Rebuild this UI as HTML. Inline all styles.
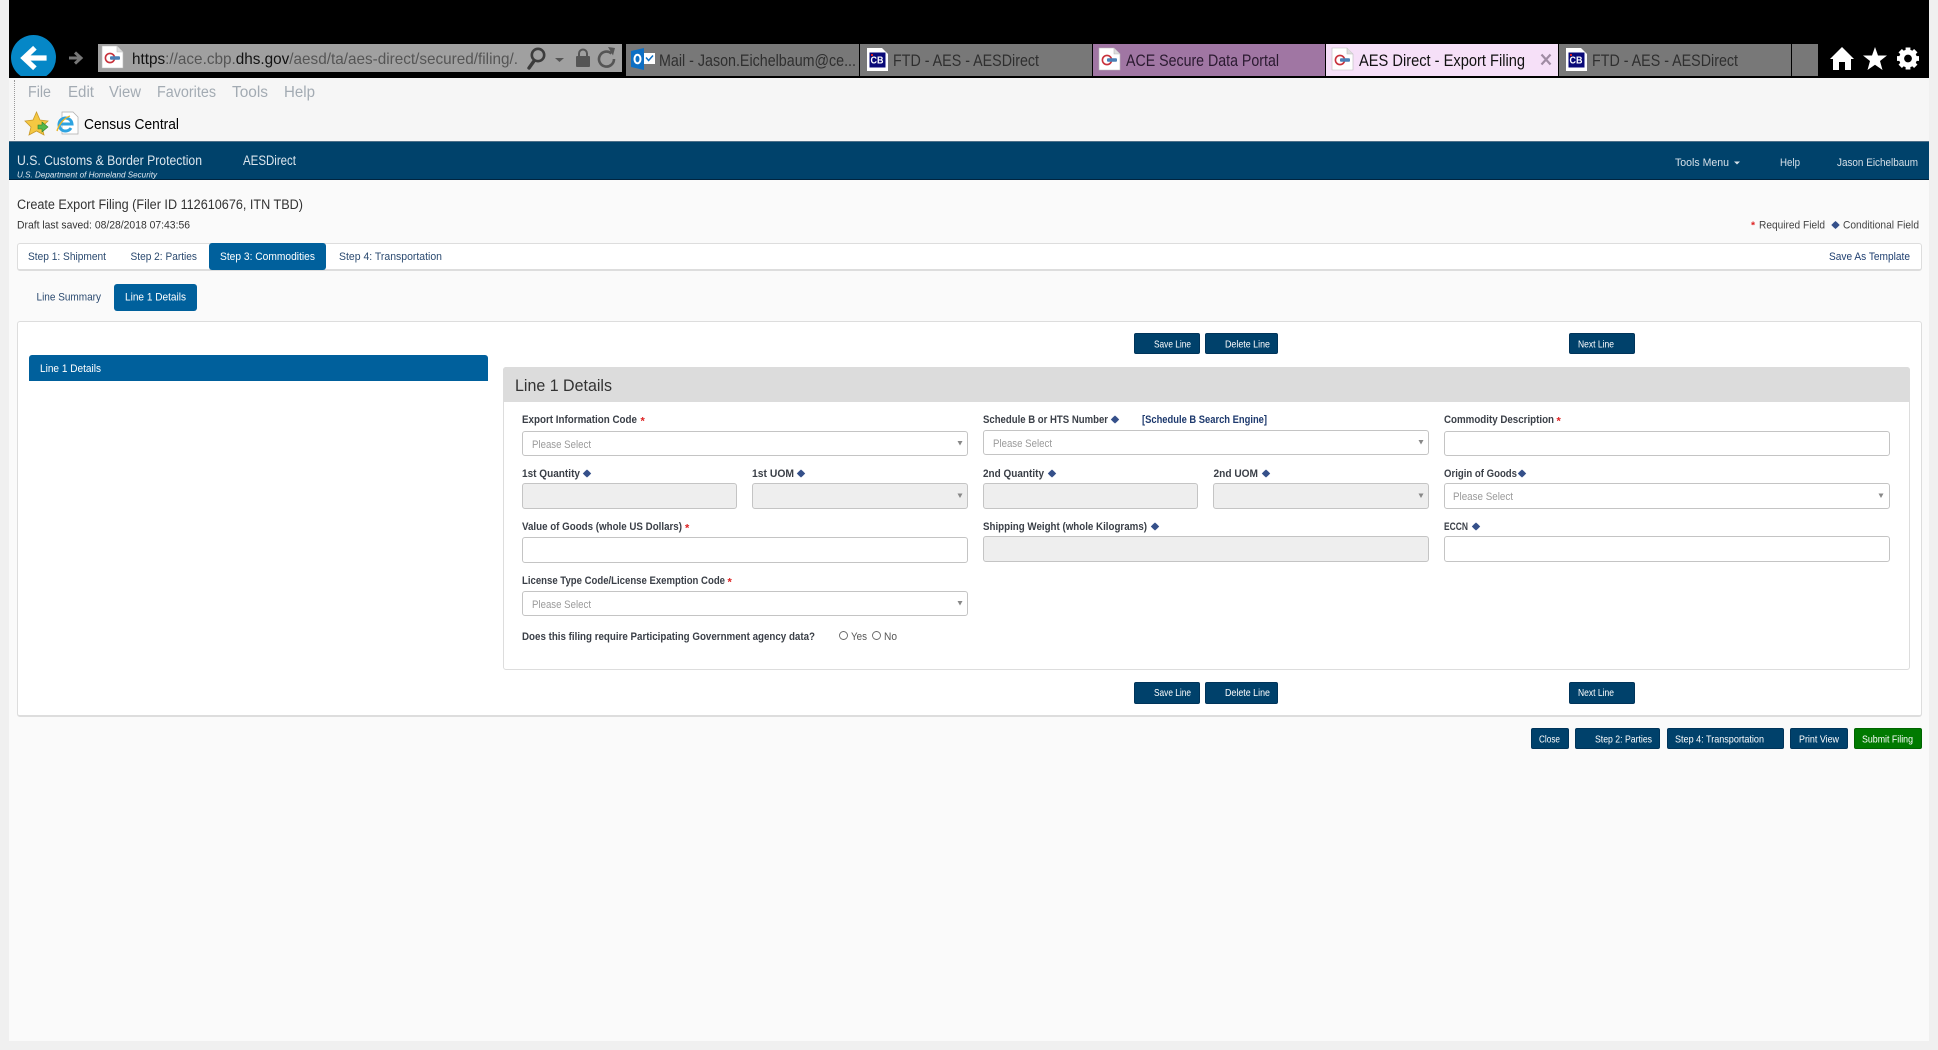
<!DOCTYPE html>
<html lang="en"><head><meta charset="utf-8"><title>AES Direct - Export Filing</title>
<style>
html,body{margin:0;padding:0;background:#f0f0f0}
#p{position:relative;width:1938px;height:1050px;overflow:hidden;background:#f0f0f0}
#p div{position:absolute;box-sizing:border-box}
.btn{background:#00416b;border:1px solid #00345a;border-radius:2px}
.f{border:1px solid #c4c4c4;border-radius:3px;background:#fff}
.d{background:#eeeeee}
svg{position:absolute;left:0;top:0}
text{font-family:"Liberation Sans",sans-serif}
.l{font-size:11px;font-weight:bold;fill:#3a3f47}
.ps{font-size:11px;fill:#9a9a9a}
.w{font-size:10.5px;fill:#fff}
.s{font-size:11px;fill:#2b4a70}
.t{font-size:17px;fill:#2f2f2f}
</style></head><body>
<div id="p">
<div style="left:9px;top:0;width:1920px;height:1041px;background:#fafafa"></div>
<div style="left:9px;top:0;width:1920px;height:78px;background:#000"></div>
<div style="left:9px;top:78px;width:1920px;height:63px;background:#f6f6f6"></div>
<div style="left:14px;top:80px;width:0;height:60px;border-left:1px dotted #999"></div>
<div style="left:9px;top:141px;width:1920px;height:39px;background:#00426b;border-top:1px solid #4d6f88;border-bottom:1px solid #00243f"></div>
<div style="left:98px;top:44px;width:524px;height:28px;background:#a0a0a0"></div>
<div style="left:626px;top:44px;width:233px;height:32px;background:#787878"></div>
<div style="left:860px;top:44px;width:232px;height:32px;background:#787878"></div>
<div style="left:1093px;top:44px;width:232px;height:32px;background:#a076a3"></div>
<div style="left:1326px;top:44px;width:232px;height:32px;background:#f6e0f8"></div>
<div style="left:1559px;top:44px;width:232px;height:32px;background:#787878"></div>
<div style="left:1792px;top:44px;width:26px;height:32px;background:#787878"></div>

<div style="left:17px;top:243px;width:1905px;height:28px;background:#fff;border:1px solid #ddd;border-bottom-width:2px;border-radius:3px"></div>
<div style="left:209px;top:243px;width:117px;height:27px;background:#00609c;border-radius:3px"></div>
<div style="left:114px;top:284px;width:83px;height:27px;background:#00609c;border-radius:3px"></div>
<div style="left:17px;top:321px;width:1905px;height:396px;background:#fff;border:1px solid #ddd;border-bottom-width:2px;border-radius:3px"></div>
<div style="left:29px;top:355px;width:459px;height:26px;background:#00609c;border-radius:3px 3px 0 0"></div>
<div style="left:503px;top:367px;width:1407px;height:303px;background:#fff;border:1px solid #ddd;border-radius:3px"></div>
<div style="left:503px;top:367px;width:1407px;height:35px;background:#dcdcdc;border-radius:3px 3px 0 0"></div>

<div class="btn" style="left:1134px;top:333px;width:66px;height:21px"></div>
<div class="btn" style="left:1205px;top:333px;width:73px;height:21px"></div>
<div class="btn" style="left:1569px;top:333px;width:66px;height:21px"></div>
<div class="btn" style="left:1134px;top:682px;width:66px;height:22px"></div>
<div class="btn" style="left:1205px;top:682px;width:73px;height:22px"></div>
<div class="btn" style="left:1569px;top:682px;width:66px;height:22px"></div>
<div class="btn" style="left:1531px;top:728px;width:38px;height:21px"></div>
<div class="btn" style="left:1575px;top:728px;width:85px;height:21px"></div>
<div class="btn" style="left:1667px;top:728px;width:117px;height:21px"></div>
<div class="btn" style="left:1790px;top:728px;width:58px;height:21px"></div>
<div class="btn" style="left:1854px;top:728px;width:68px;height:21px;background:#007a00;border-color:#006400"></div>

<div class="f" style="left:522px;top:431px;width:446px;height:25px"></div>
<div class="f" style="left:983px;top:430px;width:446px;height:25px"></div>
<div class="f" style="left:1444px;top:431px;width:446px;height:25px"></div>
<div class="f d" style="left:522px;top:483px;width:215px;height:26px"></div>
<div class="f d" style="left:752px;top:483px;width:216px;height:26px"></div>
<div class="f d" style="left:983px;top:483px;width:215px;height:26px"></div>
<div class="f d" style="left:1213px;top:483px;width:216px;height:26px"></div>
<div class="f" style="left:1444px;top:483px;width:446px;height:26px"></div>
<div class="f" style="left:522px;top:537px;width:446px;height:26px"></div>
<div class="f d" style="left:983px;top:536px;width:446px;height:26px"></div>
<div class="f" style="left:1444px;top:536px;width:446px;height:26px"></div>
<div class="f" style="left:522px;top:591px;width:446px;height:25px"></div>

<svg width="1938" height="1050" viewBox="0 0 1938 1050" xmlns="http://www.w3.org/2000/svg">
<defs>
<g id="doc"><path d="M0 0H15L21 6V22H0Z" fill="#fff" stroke="#bbb" stroke-width=".6"/><path d="M15 0V6H21" fill="#ddd" stroke="#bbb" stroke-width=".6"/><circle cx="8" cy="12" r="4.6" fill="none" stroke="#c8323c" stroke-width="1.6"/><rect x="8" y="10.2" width="10" height="3.6" rx="1" fill="#4a7fb5"/></g>
<g id="cb"><path d="M0 0H15L21 6V23H0Z" fill="#fff"/><rect x="2.5" y="4.5" width="16" height="15" fill="#0a0a78"/><rect x="4" y="6" width="2" height="2" fill="#d22"/></g>
<polygon id="dm" points="0,-4 2,-2.2 4.2,0 2,2.2 0,4 -2,2.2 -4.2,0 -2,-2.2" fill="#35508a"/>
<polygon id="ca" points="-2.5,-2 2.5,-2 0,2.5" fill="#888"/>
<rect id="tooth" x="-2.4" y="-11" width="4.8" height="5" fill="#fff"/>
</defs>

<!-- back / forward -->
<clipPath id="bc"><rect x="0" y="30" width="70" height="46"/></clipPath>
<circle cx="33.5" cy="57.5" r="22.5" fill="#0587c7" clip-path="url(#bc)"/>
<path d="M44 58H26M33 49.5 24 58l9 8.5" fill="none" stroke="#fff" stroke-width="5.2" stroke-linecap="square"/>
<path d="M69 58H80M75 52.5 81 58l-6 5.5" fill="none" stroke="#777" stroke-width="3"/>

<!-- address bar -->
<use href="#doc" x="102" y="46"/>
<text x="132" y="64" font-size="16" textLength="386" lengthAdjust="spacingAndGlyphs" fill="#555"><tspan fill="#111">https</tspan>://ace.cbp.<tspan fill="#111">dhs.gov</tspan>/aesd/ta/aes-direct/secured/filing/.</text>
<circle cx="538" cy="55" r="6.2" fill="none" stroke="#3c3c3c" stroke-width="2.6"/><path d="M534 61l-5 7" stroke="#3c3c3c" stroke-width="3.4" stroke-linecap="round"/>
<polygon points="555,58 564,58 559.5,62" fill="#555"/>
<path d="M579 57v-3.5a4 4 0 0 1 8 0V57" fill="none" stroke="#555" stroke-width="2"/><rect x="576" y="56" width="14" height="11" rx="1" fill="#555"/>
<path d="M611.5 53.5a7.5 7.5 0 1 0 2.5 5.5" fill="none" stroke="#555" stroke-width="2.6"/><polygon points="608,47 615,48 613,55.5" fill="#555"/>

<!-- tabs -->
<path d="M631 51l13-3v22l-13-3z" fill="#0d6fc4"/><ellipse cx="637.5" cy="59" rx="3" ry="4.3" fill="none" stroke="#fff" stroke-width="2"/><rect x="644" y="53" width="11" height="11" fill="#fff"/><path d="M646 57.5l2.6 3 4.4-5" fill="none" stroke="#0d6fc4" stroke-width="1.5"/>
<text class="t" x="659" y="66" textLength="197" lengthAdjust="spacingAndGlyphs">Mail - Jason.Eichelbaum@ce...</text>
<use href="#cb" x="867" y="48"/><text x="870.5" y="63.5" font-size="10" font-weight="bold" fill="#fff" textLength="13" lengthAdjust="spacingAndGlyphs">CB</text>
<text class="t" x="893" y="66" textLength="146" lengthAdjust="spacingAndGlyphs">FTD - AES - AESDirect</text>
<use href="#doc" x="1099" y="48"/>
<text class="t" x="1126" y="66" textLength="153" lengthAdjust="spacingAndGlyphs" style="fill:#2a1a30">ACE Secure Data Portal</text>
<use href="#doc" x="1332" y="48"/>
<text class="t" x="1359" y="66" textLength="166" lengthAdjust="spacingAndGlyphs" style="fill:#111">AES Direct - Export Filing</text>
<path d="M1541.5 54.5l9 10m0-10l-9 10" stroke="#a08ca4" stroke-width="2.2"/>
<use href="#cb" x="1566" y="48"/><text x="1569.5" y="63.5" font-size="10" font-weight="bold" fill="#fff" textLength="13" lengthAdjust="spacingAndGlyphs">CB</text>
<text class="t" x="1592" y="66" textLength="146" lengthAdjust="spacingAndGlyphs">FTD - AES - AESDirect</text>

<!-- right icons -->
<path d="M1842 47l12 12h-3v11h-6v-8h-6v8h-6V59h-3z" fill="#fff"/>
<polygon points="1875,47 1878,55.5 1887,55.5 1880,61 1882.5,70 1875,64.7 1867.5,70 1870,61 1863,55.5 1872,55.5" fill="#fff"/>
<g transform="translate(1908 58.5)">
<circle r="6.4" fill="none" stroke="#fff" stroke-width="5"/>
<use href="#tooth"/><use href="#tooth" transform="rotate(45)"/><use href="#tooth" transform="rotate(90)"/><use href="#tooth" transform="rotate(135)"/><use href="#tooth" transform="rotate(180)"/><use href="#tooth" transform="rotate(225)"/><use href="#tooth" transform="rotate(270)"/><use href="#tooth" transform="rotate(315)"/>
</g>

<!-- menu -->
<g font-size="15.5" fill="#a3abb3">
<text x="28" y="97" textLength="23" lengthAdjust="spacingAndGlyphs">File</text>
<text x="68" y="97" textLength="26" lengthAdjust="spacingAndGlyphs">Edit</text>
<text x="109" y="97" textLength="32" lengthAdjust="spacingAndGlyphs">View</text>
<text x="157" y="97" textLength="59" lengthAdjust="spacingAndGlyphs">Favorites</text>
<text x="232" y="97" textLength="36" lengthAdjust="spacingAndGlyphs">Tools</text>
<text x="284" y="97" textLength="31" lengthAdjust="spacingAndGlyphs">Help</text>
</g>
<polygon points="36.5,112 40,120 48,121 42,127 44,135 36.5,131 29,135 31,127 25,121 33,120" fill="#f5c842" stroke="#c99a2a" stroke-width=".8"/>
<path d="M38 125h4v-3l6 5-6 5v-3h-4z" fill="#55b84a" stroke="#2f7d2a" stroke-width=".6"/>
<path d="M62 112H73L78 117V134H62Z" fill="#fff" stroke="#aaa" stroke-width=".7"/>
<path d="M59.5 124H72A6.5 6.5 0 1 0 71 128" fill="none" stroke="#2ea3e0" stroke-width="3"/><path d="M57 131c2-7 7-13 13-15" fill="none" stroke="#e8b52c" stroke-width="1.4"/>
<text x="84" y="129" font-size="15" fill="#000" textLength="95" lengthAdjust="spacingAndGlyphs">Census Central</text>

<!-- header -->
<text x="17" y="165" font-size="13.5" fill="#dce6ee" textLength="185" lengthAdjust="spacingAndGlyphs">U.S. Customs &amp; Border Protection</text>
<text x="243" y="165" font-size="13.5" fill="#dce6ee" textLength="53" lengthAdjust="spacingAndGlyphs">AESDirect</text>
<text x="17" y="177.5" font-size="8.5" font-style="italic" fill="#dce6ee" textLength="140" lengthAdjust="spacingAndGlyphs">U.S. Department of Homeland Security</text>
<g font-size="11" fill="#d6e0e8">
<text x="1675" y="166" textLength="54" lengthAdjust="spacingAndGlyphs">Tools Menu</text>
<text x="1780" y="166" textLength="20" lengthAdjust="spacingAndGlyphs">Help</text>
<text x="1837" y="166" textLength="81" lengthAdjust="spacingAndGlyphs">Jason Eichelbaum</text>
</g>
<polygon points="1734,161.5 1740,161.5 1737,164.5" fill="#d6e0e8"/>

<!-- title -->
<text x="17" y="209" font-size="13.5" fill="#333" textLength="286" lengthAdjust="spacingAndGlyphs">Create Export Filing (Filer ID 112610676, ITN TBD)</text>
<text x="17" y="228.5" font-size="11" fill="#333" textLength="173" lengthAdjust="spacingAndGlyphs">Draft last saved: 08/28/2018 07:43:56</text>
<text x="1751" y="228.5" font-size="10.5" font-weight="bold" fill="#d22">*</text>
<text x="1759" y="228.5" font-size="11" fill="#444" textLength="66" lengthAdjust="spacingAndGlyphs">Required Field</text>
<use href="#dm" x="1835.5" y="225"/>
<text x="1843" y="228.5" font-size="11" fill="#444" textLength="76" lengthAdjust="spacingAndGlyphs">Conditional Field</text>

<!-- steps -->
<text class="s" x="28" y="260" textLength="78" lengthAdjust="spacingAndGlyphs">Step 1: Shipment</text>
<text class="s" x="130.5" y="260" textLength="66.5" lengthAdjust="spacingAndGlyphs">Step 2: Parties</text>
<text class="s" x="220" y="260" textLength="95" lengthAdjust="spacingAndGlyphs" style="fill:#fff">Step 3: Commodities</text>
<text class="s" x="339" y="260" textLength="103" lengthAdjust="spacingAndGlyphs">Step 4: Transportation</text>
<text class="s" x="1829" y="260" textLength="81" lengthAdjust="spacingAndGlyphs" style="fill:#1f3f70">Save As Template</text>
<text class="s" x="36.5" y="300.5" textLength="64.5" lengthAdjust="spacingAndGlyphs">Line Summary</text>
<text class="s" x="125" y="300.5" textLength="61" lengthAdjust="spacingAndGlyphs" style="fill:#fff">Line 1 Details</text>
<text class="s" x="40" y="372" textLength="61" lengthAdjust="spacingAndGlyphs" style="fill:#fff">Line 1 Details</text>
<text x="515" y="391" font-size="16.5" fill="#333" textLength="97" lengthAdjust="spacingAndGlyphs">Line 1 Details</text>

<!-- button labels -->
<g>
<text class="w" x="1154" y="347.5" textLength="37" lengthAdjust="spacingAndGlyphs">Save Line</text>
<text class="w" x="1225" y="347.5" textLength="45" lengthAdjust="spacingAndGlyphs">Delete Line</text>
<text class="w" x="1578" y="347.5" textLength="36" lengthAdjust="spacingAndGlyphs">Next Line</text>
<text class="w" x="1154" y="696" textLength="37" lengthAdjust="spacingAndGlyphs">Save Line</text>
<text class="w" x="1225" y="696" textLength="45" lengthAdjust="spacingAndGlyphs">Delete Line</text>
<text class="w" x="1578" y="696" textLength="36" lengthAdjust="spacingAndGlyphs">Next Line</text>
<text class="w" x="1539" y="742.5" textLength="21" lengthAdjust="spacingAndGlyphs">Close</text>
<text class="w" x="1595" y="742.5" textLength="57" lengthAdjust="spacingAndGlyphs">Step 2: Parties</text>
<text class="w" x="1675" y="742.5" textLength="89" lengthAdjust="spacingAndGlyphs">Step 4: Transportation</text>
<text class="w" x="1799" y="742.5" textLength="40" lengthAdjust="spacingAndGlyphs">Print View</text>
<text class="w" x="1862" y="742.5" textLength="51" lengthAdjust="spacingAndGlyphs">Submit Filing</text>
</g>

<!-- labels -->
<text class="l" x="522" y="423" textLength="115" lengthAdjust="spacingAndGlyphs">Export Information Code</text>
<text x="640.5" y="424.5" font-size="11" font-weight="bold" fill="#d22">*</text>
<text class="l" x="983" y="423" textLength="125" lengthAdjust="spacingAndGlyphs">Schedule B or HTS Number</text>
<use href="#dm" x="1115" y="419.5"/>
<text class="l" x="1142" y="423" textLength="125" lengthAdjust="spacingAndGlyphs" style="fill:#1e3a6e">[Schedule B Search Engine]</text>
<text class="l" x="1444" y="423" textLength="110" lengthAdjust="spacingAndGlyphs">Commodity Description</text>
<text x="1556.5" y="424.5" font-size="11" font-weight="bold" fill="#d22">*</text>

<text class="l" x="522" y="477" textLength="58" lengthAdjust="spacingAndGlyphs">1st Quantity</text><use href="#dm" x="587" y="473.5"/>
<text class="l" x="752" y="477" textLength="42" lengthAdjust="spacingAndGlyphs">1st UOM</text><use href="#dm" x="801" y="473.5"/>
<text class="l" x="983" y="477" textLength="61" lengthAdjust="spacingAndGlyphs">2nd Quantity</text><use href="#dm" x="1052" y="473.5"/>
<text class="l" x="1213.5" y="477" textLength="44.5" lengthAdjust="spacingAndGlyphs">2nd UOM</text><use href="#dm" x="1266" y="473.5"/>
<text class="l" x="1444" y="477" textLength="73" lengthAdjust="spacingAndGlyphs">Origin of Goods</text><use href="#dm" x="1522" y="473.5"/>

<text class="l" x="522" y="530" textLength="160" lengthAdjust="spacingAndGlyphs">Value of Goods (whole US Dollars)</text>
<text x="685" y="531.5" font-size="11" font-weight="bold" fill="#d22">*</text>
<text class="l" x="983" y="530" textLength="164" lengthAdjust="spacingAndGlyphs">Shipping Weight (whole Kilograms)</text><use href="#dm" x="1155" y="526.5"/>
<text class="l" x="1444" y="530" textLength="24" lengthAdjust="spacingAndGlyphs">ECCN</text><use href="#dm" x="1476" y="526.5"/>

<text class="l" x="522" y="584" textLength="203" lengthAdjust="spacingAndGlyphs">License Type Code/License Exemption Code</text>
<text x="727.5" y="585.5" font-size="11" font-weight="bold" fill="#d22">*</text>

<text class="l" x="522" y="640" textLength="293" lengthAdjust="spacingAndGlyphs">Does this filing require Participating Government agency data?</text>
<circle cx="843.5" cy="635.5" r="4" fill="#fff" stroke="#666" stroke-width=".9"/>
<text x="851" y="640" font-size="11" fill="#555" textLength="16" lengthAdjust="spacingAndGlyphs">Yes</text>
<circle cx="876.5" cy="635.5" r="4" fill="#fff" stroke="#666" stroke-width=".9"/>
<text x="884" y="640" font-size="11" fill="#555" textLength="13" lengthAdjust="spacingAndGlyphs">No</text>

<!-- placeholders -->
<text class="ps" x="532" y="448" textLength="59" lengthAdjust="spacingAndGlyphs">Please Select</text>
<text class="ps" x="993" y="447" textLength="59" lengthAdjust="spacingAndGlyphs">Please Select</text>
<text class="ps" x="1453" y="500" textLength="60" lengthAdjust="spacingAndGlyphs">Please Select</text>
<text class="ps" x="532" y="608" textLength="59" lengthAdjust="spacingAndGlyphs">Please Select</text>
<use href="#ca" x="960" y="443"/><use href="#ca" x="1421" y="442"/><use href="#ca" x="960" y="495.5"/><use href="#ca" x="1421" y="495.5"/><use href="#ca" x="1881" y="495.5"/><use href="#ca" x="960" y="603"/>
</svg>
</div>
</body></html>
